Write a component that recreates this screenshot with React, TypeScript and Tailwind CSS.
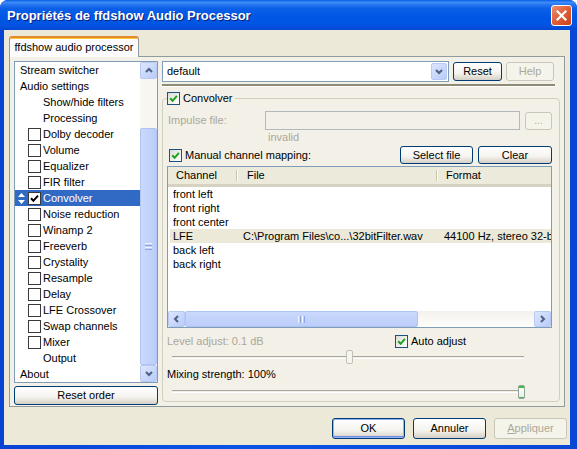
import React from "react";

const treeItems: { label: string; kind: "top" | "sub" | "check"; selected?: boolean }[] = [
  { label: "Stream switcher", kind: "top" },
  { label: "Audio settings", kind: "top" },
  { label: "Show/hide filters", kind: "sub" },
  { label: "Processing", kind: "sub" },
  { label: "Dolby decoder", kind: "check" },
  { label: "Volume", kind: "check" },
  { label: "Equalizer", kind: "check" },
  { label: "FIR filter", kind: "check" },
  { label: "Convolver", kind: "check", selected: true },
  { label: "Noise reduction", kind: "check" },
  { label: "Winamp 2", kind: "check" },
  { label: "Freeverb", kind: "check" },
  { label: "Crystality", kind: "check" },
  { label: "Resample", kind: "check" },
  { label: "Delay", kind: "check" },
  { label: "LFE Crossover", kind: "check" },
  { label: "Swap channels", kind: "check" },
  { label: "Mixer", kind: "check" },
  { label: "Output", kind: "sub" },
  { label: "About", kind: "top" },
];

const channels = [
  { ch: "front left" },
  { ch: "front right" },
  { ch: "front center" },
  { ch: "LFE", file: "C:\\Program Files\\co...\\32bitFilter.wav", fmt: "44100 Hz, stereo 32-bit float" },
  { ch: "back left" },
  { ch: "back right" },
];

function Chevron({ dir }: { dir: "up" | "down" | "left" | "right" }) {
  const d = {
    up: "M1 5 L4 2 L7 5",
    down: "M1 2 L4 5 L7 2",
    left: "M5 1 L2 4 L5 7",
    right: "M2 1 L5 4 L2 7",
  }[dir];
  return (
    <svg width="8" height="8" viewBox="0 0 8 8">
      <path d={d} stroke="#4D6185" strokeWidth="2" fill="none" />
    </svg>
  );
}

function XpCheck() {
  return (
    <span className="w-[13px] h-[13px] shrink-0 border border-[#1C5180] bg-[linear-gradient(135deg,#DCDCD7,#FFFFFF)] flex items-center justify-center">
      <svg width="9" height="9" viewBox="0 0 9 9">
        <path d="M1.2 4.3 L3.6 6.8 L7.9 1.8" stroke="#21A121" strokeWidth="2" fill="none" />
      </svg>
    </span>
  );
}

function XpButton({
  children,
  className = "",
  disabled,
  isDefault,
}: {
  children: React.ReactNode;
  className?: string;
  disabled?: boolean;
  isDefault?: boolean;
}) {
  if (disabled) {
    return (
      <div
        className={`shrink-0 flex items-center justify-center rounded-[3px] border border-[#C9C7BA] bg-[#F5F4EA] text-[#ACA899] ${className}`}
      >
        {children}
      </div>
    );
  }
  return (
    <div
      className={`shrink-0 flex items-center justify-center rounded-[3px] border border-[#003C74] bg-[linear-gradient(180deg,#FFFFFF_0%,#F4F3EE_60%,#D6D0C5_100%)] ${
        isDefault ? "shadow-[inset_0_0_0_1px_#98B4F0,inset_0_-1px_0_1px_#6C8DE6]" : ""
      } ${className}`}
    >
      {children}
    </div>
  );
}

function ScrollButton({ dir, className = "" }: { dir: "up" | "down" | "left" | "right"; className?: string }) {
  return (
    <div
      className={`shrink-0 flex items-center justify-center rounded-[2px] border border-[#B7CAF5] bg-[linear-gradient(135deg,#DDE6FD,#B9CBF8)] ${className}`}
    >
      <Chevron dir={dir} />
    </div>
  );
}

function TitleBar() {
  return (
    <div className="h-[30px] shrink-0 flex items-center pl-[7px] pr-[5px] bg-[linear-gradient(180deg,#0A5CE6_0%,#3D8EF7_8%,#2A79F2_14%,#0C60E8_28%,#0057E5_55%,#0055E3_80%,#0348D4_100%)]">
      <span className="text-white font-bold text-[13px] [text-shadow:1px_1px_0_#0A1E7A]">
        Propriétés de ffdshow Audio Processor
      </span>
      <div className="ml-auto w-[21px] h-[21px] rounded-[3px] border border-white bg-[linear-gradient(135deg,#EE9071_0%,#E2603A_45%,#C8421A_100%)] flex items-center justify-center">
        <svg width="11" height="11" viewBox="0 0 11 11">
          <path d="M1.5 1.5 L9.5 9.5 M9.5 1.5 L1.5 9.5" stroke="white" strokeWidth="2.2" strokeLinecap="square" />
        </svg>
      </div>
    </div>
  );
}

function FilterTree() {
  return (
    <div className="h-[322px] border border-[#7F9DB9] bg-white flex">
      <div className="flex-1 min-w-0 flex flex-col">
        {treeItems.map((it) => (
          <div
            key={it.label}
            className={`h-[16px] shrink-0 flex items-center whitespace-nowrap ${
              it.selected ? "bg-[#316AC5] text-white" : ""
            } ${it.kind === "top" ? "pl-[5px]" : it.kind === "sub" ? "pl-[28px]" : it.selected ? "pl-[3px]" : "pl-[13px]"}`}
          >
            {it.selected && (
              <svg width="7" height="11" viewBox="0 0 7 11" className="mr-[3px]">
                <path d="M3.5 0 L7 4 L0 4 Z M0 7 L7 7 L3.5 11 Z" fill="white" />
              </svg>
            )}
            {it.kind === "check" && (
              <span className="w-[13px] h-[13px] shrink-0 border border-[#3A3A3A] bg-white mr-[2px] flex items-center justify-center">
                {it.selected && (
                  <svg width="9" height="9" viewBox="0 0 9 9">
                    <path d="M1 4.3 L3.4 6.8 L8 1.6" stroke="black" strokeWidth="2" fill="none" />
                  </svg>
                )}
              </span>
            )}
            {it.label}
          </div>
        ))}
      </div>
      <div className="w-[17px] shrink-0 flex flex-col bg-[#F7F6F1]">
        <ScrollButton dir="up" className="h-[17px]" />
        <div className="h-[49px]" />
        <div className="flex-1 rounded-[2px] border border-[#AEC3F4] bg-[linear-gradient(90deg,#CAD9FC,#BBCDF9)] flex items-center justify-center">
          <div className="flex flex-col gap-[1px]">
            <div className="w-[7px] h-[1px] bg-[#EEF3FF]" />
            <div className="w-[7px] h-[1px] bg-[#8CA6E3]" />
            <div className="w-[7px] h-[1px] bg-[#EEF3FF]" />
            <div className="w-[7px] h-[1px] bg-[#8CA6E3]" />
          </div>
        </div>
        <ScrollButton dir="down" className="h-[17px]" />
      </div>
    </div>
  );
}

function ChannelList() {
  return (
    <div className="mt-[2px] h-[162px] border border-[#7F9DB9] bg-white flex flex-col overflow-hidden">
      <div className="h-[20px] shrink-0 flex items-stretch bg-[#EBEADB] border-b-[3px] border-[#D6D2C2] whitespace-nowrap">
        <div className="w-[68px] pl-[8px] flex items-center">Channel</div>
        <div className="w-[2px] my-[3px] border-l border-[#C7C5B2] border-r border-r-white" />
        <div className="w-[198px] pl-[9px] flex items-center">File</div>
        <div className="w-[2px] my-[3px] border-l border-[#C7C5B2] border-r border-r-white" />
        <div className="flex-1 pl-[8px] flex items-center">Format</div>
      </div>
      <div className="flex-1 flex flex-col">
        {channels.map((c) => (
          <div
            key={c.ch}
            className={`ml-[2px] h-[14px] shrink-0 flex items-center whitespace-nowrap overflow-hidden ${
              c.file ? "bg-[#ECE9D8]" : ""
            }`}
          >
            <div className="w-[67px] pl-[3px] shrink-0">{c.ch}</div>
            <div className="w-[200px] pl-[6px] shrink-0">{c.file}</div>
            <div className="pl-[7px] shrink-0">{c.fmt}</div>
          </div>
        ))}
      </div>
      <div className="h-[16px] shrink-0 flex bg-[linear-gradient(180deg,#F3F1EC,#FEFEFB)]">
        <ScrollButton dir="left" className="w-[17px]" />
        <div className="w-[233px] shrink-0 rounded-[2px] border border-[#AEC3F4] bg-[linear-gradient(180deg,#CAD9FC,#BBCDF9)] flex items-center justify-center gap-[1px]">
          <div className="w-[1px] h-[7px] bg-[#EEF3FF]" />
          <div className="w-[1px] h-[7px] bg-[#8CA6E3]" />
          <div className="w-[1px] h-[7px] bg-[#EEF3FF]" />
          <div className="w-[1px] h-[7px] bg-[#8CA6E3]" />
        </div>
        <div className="flex-1" />
        <ScrollButton dir="right" className="w-[17px]" />
      </div>
    </div>
  );
}

function Slider({ thumbLeft, green }: { thumbLeft: number; green?: boolean }) {
  return (
    <div className="relative h-[16px] flex items-center">
      <div className="ml-[5px] w-[352px] h-[3px] border-t border-[#A9A79C] border-b border-b-white bg-[#F1EFE8]" />
      {green ? (
        <div
          className="absolute top-[2px] w-[7px] h-[14px] rounded-[2px] border border-[#8FA59A] bg-[linear-gradient(180deg,#3FBF3F_0,#3FBF3F_2px,#FBFBF8_2px,#EDEDE6_11px,#3FBF3F_11px,#3FBF3F_100%)]"
          style={{ left: thumbLeft }}
        />
      ) : (
        <div
          className="absolute top-[1px] w-[7px] h-[14px] rounded-[2px] border border-[#C2C0B3] bg-[#F5F4EE]"
          style={{ left: thumbLeft }}
        />
      )}
    </div>
  );
}

function ConvolverGroup() {
  return (
    <fieldset className="mt-[4px] w-[398px] min-w-0 h-[311px] border border-[#D0D0BF] rounded-[4px] pl-[4px] pr-[7px]">
      <legend className="h-[14px] flex items-center pr-[2px]">
        <XpCheck />
        <span className="ml-[3px]">Convolver</span>
      </legend>
      <div className="mt-[6px] h-[19px] flex items-center">
        <span className="w-[101px] pl-[1px] text-[#ACA899]">Impulse file:</span>
        <div className="w-[255px] h-[19px] shrink-0 border border-[#B3B8BE]" />
        <XpButton disabled className="ml-[5px] w-[27px] h-[18px] text-[10px]">
          ...
        </XpButton>
      </div>
      <div className="mt-[1px] pl-[101px] h-[13px] text-[#ACA899]">invalid</div>
      <div className="mt-[2px] h-[18px] flex items-center">
        <span className="ml-[2px]">
          <XpCheck />
        </span>
        <span className="ml-[3px] flex-1">Manual channel mapping:</span>
        <XpButton className="w-[73px] h-[18px]">Select file</XpButton>
        <XpButton className="ml-[5px] w-[74px] h-[18px]">Clear</XpButton>
      </div>
      <ChannelList />
      <div className="mt-[7px] h-[13px] flex items-center">
        <span className="w-[228px] text-[#ACA899]">Level adjust: 0.1 dB</span>
        <XpCheck />
        <span className="ml-[3px]">Auto adjust</span>
      </div>
      <div className="mt-[1px]">
        <Slider thumbLeft={179} />
      </div>
      <div className="mt-[3px] h-[13px] flex items-center">Mixing strength: 100%</div>
      <div className="mt-[2px]">
        <Slider thumbLeft={351} green />
      </div>
    </fieldset>
  );
}

export default function App() {
  return (
    <div className="w-[577px] h-[449px] rounded-t-[8px] overflow-hidden flex flex-col bg-[linear-gradient(90deg,#0843D4,#0A54E6_40%,#0847D6)] font-['Liberation_Sans',Arial,sans-serif] text-[11px] leading-[13px] text-black">
      <TitleBar />
      <div className="flex-1 ml-[4px] mr-[7px] mb-[4px] bg-[#ECE9D8] flex flex-col">
        <div className="h-[26px] shrink-0 pt-[6px] pl-[5px] flex items-end">
          <div className="relative z-10 w-[130px] h-[21px] -mb-[1px] rounded-t-[3px] border-x border-[#919B9C] border-t-2 border-t-[#E68B2C] shadow-[inset_0_1px_0_#FFC73C] bg-[#FCFCFE] flex items-center justify-center">
            ffdshow audio processor
          </div>
        </div>
        <div className="ml-[5px] w-[556px] h-[351px] shrink-0 border border-[#919B9C] bg-[#F2F0E7] flex pt-[4px] pl-[4px]">
          <div className="w-[144px] shrink-0 flex flex-col">
            <FilterTree />
            <XpButton className="mt-[3px] h-[19px]">Reset order</XpButton>
          </div>
          <div className="ml-[4px] min-w-0 flex flex-col">
            <div className="flex items-center">
              <div className="w-[287px] h-[21px] shrink-0 border border-[#7F9DB9] bg-white flex items-stretch">
                <span className="flex-1 pl-[4px] flex items-center">default</span>
                <ScrollButton dir="down" className="w-[16px] m-[1px]" />
              </div>
              <XpButton className="ml-[4px] w-[49px] h-[19px]">Reset</XpButton>
              <XpButton disabled className="ml-[4px] w-[48px] h-[19px]">
                Help
              </XpButton>
            </div>
            <div className="mt-[2px] w-[393px] h-[3px] border-t-2 border-[#8E8A78] border-b border-b-white" />
            <ConvolverGroup />
          </div>
        </div>
        <div className="mt-[11px] pr-[3px] flex justify-end gap-[8px]">
          <XpButton isDefault className="w-[73px] h-[21px]">
            OK
          </XpButton>
          <XpButton className="w-[73px] h-[21px]">Annuler</XpButton>
          <XpButton disabled className="w-[73px] h-[21px]">
            <span>
              <span className="underline">A</span>ppliquer
            </span>
          </XpButton>
        </div>
      </div>
    </div>
  );
}
